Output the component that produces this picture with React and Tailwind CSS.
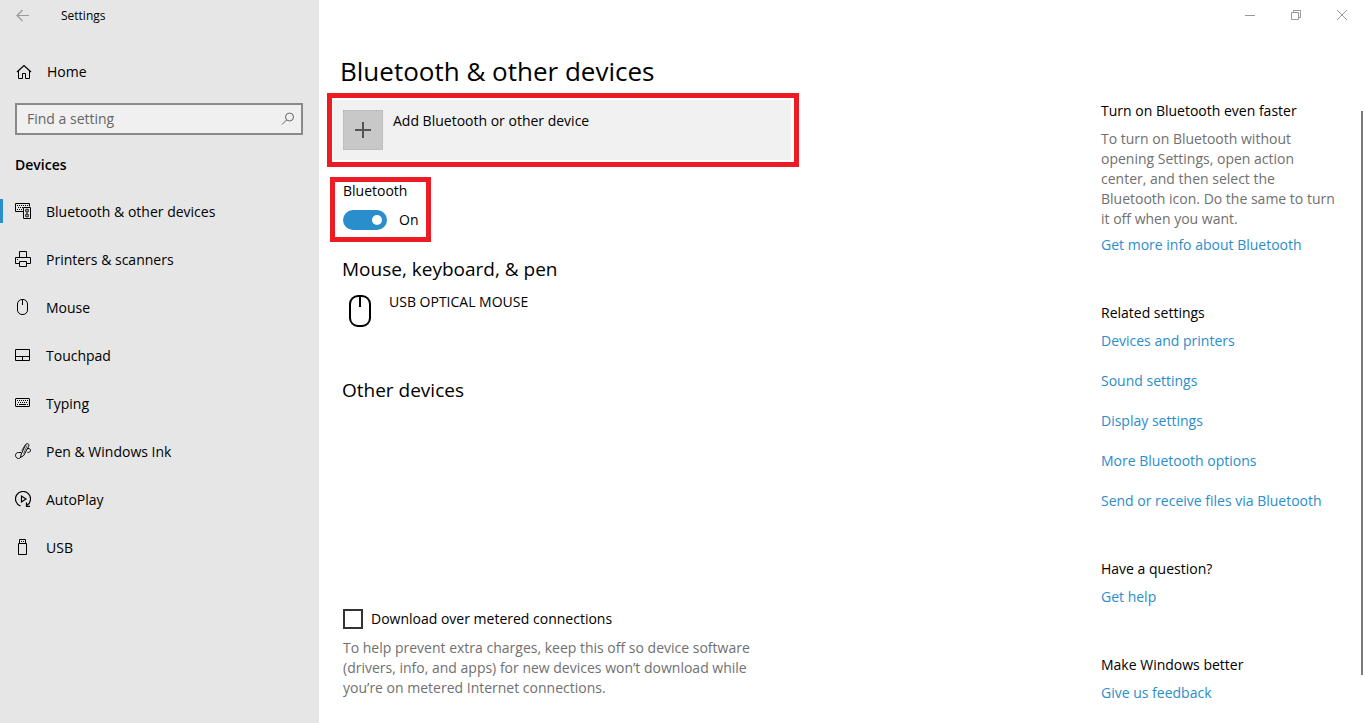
import React, { useState } from 'react';

function Icon({ size = 16, className = '', children }) {
  return (
    <svg
      width={size}
      height={size}
      viewBox={`0 0 ${size} ${size}`}
      fill="none"
      stroke="currentColor"
      className={`shrink-0 ${className}`}
      aria-hidden="true"
    >
      {children}
    </svg>
  );
}

const icons = {
  devices: (
    <Icon>
      <path d="M8 8.5H.5v-8h14v3" />
      <path d="M2 2.5h11" strokeDasharray="1 1" />
      <path d="M3 4.5h5M2 6.5h5" strokeDasharray="1 1" />
      <path d="M8.5 4.5h7v11h-7z" />
      <path d="M10 6h4v3h-4zM10 11h4v3h-4z" fill="currentColor" fillOpacity=".35" stroke="none" />
      <circle cx="12" cy="7.5" r="1.5" strokeOpacity=".7" />
      <circle cx="12" cy="12.5" r="1.5" strokeOpacity=".7" />
      <path d="M11 10h2" />
    </Icon>
  ),
  printer: (
    <Icon>
      <path d="M4.5 6V.5h7V6" />
      <path d="M4 12.5H.5v-6h15v6H12" />
      <path d="M4.5 10.5h7v5h-7z" />
      <path d="M2 8.5h1" />
    </Icon>
  ),
  mouse: (
    <Icon>
      <rect x="2.5" y=".5" width="10" height="15" rx="4.5" />
      <path d="M7.5 1v5" />
    </Icon>
  ),
  touchpad: (
    <Icon>
      <path d="M.5 2.5h14v11H.5zM1 9.5h13M7.5 10v3" />
    </Icon>
  ),
  keyboard: (
    <Icon>
      <rect x=".5" y="3.5" width="14" height="8" rx=".5" />
      <path d="M2 5.5h11M3 7.5h10" strokeDasharray="1 1" />
      <path d="M2 9.5h1M4 9.5h7M12 9.5h1" />
    </Icon>
  ),
  pen: (
    <Icon>
      <path d="M5.5 14.500l.7-3.500L10.500 2c.6-1.200 1.700-1.700 2.600-1.200.9.5 1.100 1.500.5 2.700L8.700 12.500z" />
      <path d="M10.500 1.500L6.500 7.500M12.200 2.500L8.500 10.500" strokeOpacity=".6" />
      <path d="M6 9.500H3.500c-1.800 0-3 1.200-3 2.800s1.300 3.200 3 3.200c1 0 1.700-.4 2.200-1.200" />
      <path d="M13 5.500c1.600 0 2.500.7 2.500 1.900 0 1.300-1.100 2.100-3 2.100" />
    </Icon>
  ),
  autoplay: (
    <Icon>
      <path d="M5.500 15A7.500 7.500 0 1 1 12 14.300" strokeWidth="1.200" />
      <path d="M11.500 11.500v4H15" strokeWidth="1.300" />
      <path d="M6.500 5v6l4.500-3z" strokeWidth="1.200" />
    </Icon>
  ),
  usb: (
    <Icon>
      <path d="M4.500 4V.5h6V4" />
      <path d="M3.500 4.500h8v11h-8z" />
      <path d="M6 2.500h1M8 2.500h1" />
    </Icon>
  )
};

const navItems = [
  { label: 'Bluetooth & other devices', icon: 'devices', active: true },
  { label: 'Printers & scanners', icon: 'printer' },
  { label: 'Mouse', icon: 'mouse' },
  { label: 'Touchpad', icon: 'touchpad' },
  { label: 'Typing', icon: 'keyboard' },
  { label: 'Pen & Windows Ink', icon: 'pen' },
  { label: 'AutoPlay', icon: 'autoplay' },
  { label: 'USB', icon: 'usb' }
];

const relatedLinks = [
  'Devices and printers',
  'Sound settings',
  'Display settings',
  'More Bluetooth options',
  'Send or receive files via Bluetooth'
];

function Sidebar() {
  return (
    <aside className="w-[319px] shrink-0 bg-[#e6e6e6]">
      <div className="flex h-8 items-center pl-4">
        <button type="button" aria-label="Back" className="text-[#999]">
          <Icon>
            <path d="M1 7.500h12M6.500 2L1 7.500 6.500 13" strokeWidth="1.200" />
          </Icon>
        </button>
        <span className="ml-[29px] text-xs">Settings</span>
      </div>

      <a href="#home" className="mt-4 flex h-12 items-center pl-4">
        <Icon>
          <path d="M1 8l7-6.500L15 8" strokeWidth="1.200" />
          <path d="M2.500 7v7.500h4v-5h3v5h4V7" />
        </Icon>
        <span className="ml-[15px]">Home</span>
      </a>

      <label className="mx-[15px] mt-[7px] flex h-8 w-[288px] items-center border-2 border-[#8a8a8a] bg-[#f0f0f0] pr-[5px] pl-2.5">
        <input
          type="text"
          aria-label="Find a setting"
          placeholder="Find a setting"
          className="min-w-0 flex-1 bg-transparent outline-none placeholder:text-[#666]"
        />
        <Icon className="text-[#666]">
          <circle cx="9.500" cy="6" r="4" />
          <path d="M6.500 9L2 13.500" />
        </Icon>
      </label>

      <h2 className="mt-5 pl-[15px] font-semibold">Devices</h2>

      <nav className="mt-3">
        {navItems.map((item) => (
          <a key={item.label} href={`#${item.icon}`} className="flex h-12 items-center">
            <span className={`h-6 w-[3px] ${item.active ? 'bg-[#2a8dcc]' : ''}`} />
            <span className="ml-3">{icons[item.icon]}</span>
            <span className="ml-[15px] pt-0.5">{item.label}</span>
          </a>
        ))}
      </nav>
    </aside>
  );
}

function WindowControls() {
  return (
    <div className="flex h-[30px] justify-end text-[#999]">
      <button type="button" aria-label="Minimize" className="flex w-[46px] items-center justify-center">
        <Icon size={10}>
          <path d="M0 5.500h10" />
        </Icon>
      </button>
      <button type="button" aria-label="Restore" className="flex w-[46px] items-center justify-center">
        <Icon size={10}>
          <path d="M.5 2.500h7v7h-7zM2.500 2V.5h7v7H8" />
        </Icon>
      </button>
      <button type="button" aria-label="Close" className="flex w-[46px] items-center justify-center">
        <Icon size={10}>
          <path d="M0 0l10 10M10 0L0 10" />
        </Icon>
      </button>
    </div>
  );
}

function DeviceSettings() {
  const [bluetooth, setBluetooth] = useState(true);
  const [metered, setMetered] = useState(false);

  return (
    <main className="min-w-0 flex-1 pt-6 pl-2">
      <h1 className="pl-[13px] text-[26px] leading-[34px]">Bluetooth & other devices</h1>

      {/* Highlighted: add a device */}
      <div className="mt-[5px] max-w-[472px] border-5 border-[#ed1c24] py-0.5 pr-[3px] pl-px">
        <button type="button" className="flex h-15 w-full items-start bg-[#f1f1f1] p-2.5 text-left">
          <span className="flex size-10 items-center justify-center border border-dotted border-[#b4b4b4] bg-[#c8c8c8] text-[#555]">
            <Icon>
              <path d="M0 8h16M8 0v16" strokeWidth="2" />
            </Icon>
          </span>
          <span className="ml-2.5 pt-px">Add Bluetooth or other device</span>
        </button>
      </div>

      {/* Highlighted: bluetooth switch */}
      <div className="mt-2.5 ml-[3px] h-[65px] w-[101px] border-5 border-[#ed1c24] pl-2">
        <label htmlFor="bluetooth" className="block leading-[18px]">
          Bluetooth
        </label>
        <div className="mt-2.5 flex items-center">
          <input
            id="bluetooth"
            type="checkbox"
            role="switch"
            checked={bluetooth}
            onChange={(e) => setBluetooth(e.target.checked)}
            className="flex h-5 w-11 appearance-none items-center rounded-full bg-[#999] px-[5px] before:size-2.5 before:rounded-full before:bg-white checked:justify-end checked:bg-[#2a8dcc]"
          />
          <span className="ml-3">{bluetooth ? 'On' : 'Off'}</span>
        </div>
      </div>

      <section className="mt-[13px] pl-[15px]">
        <h2 className="text-[19px] leading-7">Mouse, keyboard, & pen</h2>
        <div className="mt-2 flex items-start">
          <svg width="36" height="36" viewBox="0 0 36 36" fill="none" stroke="black" strokeWidth="2" aria-hidden="true">
            <rect x="8" y="5" width="20" height="30" rx="8" />
            <path d="M18 5v11" />
          </svg>
          <span className="ml-[11px] pt-px">USB OPTICAL MOUSE</span>
        </div>
      </section>

      <section className="mt-[49px] pl-[15px]">
        <h2 className="text-[19px] leading-7">Other devices</h2>
      </section>

      <section className="mt-[205px] max-w-[440px] pl-4">
        <label className="flex items-center">
          <input
            type="checkbox"
            checked={metered}
            onChange={(e) => setMetered(e.target.checked)}
            className="size-5 appearance-none border-2 border-[#333] checked:bg-[#2a8dcc]"
          />
          <span className="ml-2">Download over metered connections</span>
        </label>
        <p className="mt-[9px] text-[#707070]">
          To help prevent extra charges, keep this off so device software (drivers, info, and apps) for new
          devices won’t download while you’re on metered Internet connections.
        </p>
      </section>
    </main>
  );
}

function HelpLink({ children }) {
  return (
    <a href="#help" className="block text-[#2a8dcc]">
      {children}
    </a>
  );
}

function HelpPanel() {
  return (
    <div className="flex w-[264px] shrink-0 justify-between pt-[71px] pr-0.5">
      <div className="w-60">
        <h3>Turn on Bluetooth even faster</h3>
        <p className="mt-2 text-[#707070]">
          To turn on Bluetooth without opening Settings, open action center, and then select the Bluetooth
          icon. Do the same to turn it off when you want.
        </p>
        <div className="mt-1.5">
          <HelpLink>Get more info about Bluetooth</HelpLink>
        </div>

        <h3 className="mt-12">Related settings</h3>
        <div className="mt-2 flex flex-col gap-5">
          {relatedLinks.map((link) => (
            <HelpLink key={link}>{link}</HelpLink>
          ))}
        </div>

        <h3 className="mt-12">Have a question?</h3>
        <div className="mt-2">
          <HelpLink>Get help</HelpLink>
        </div>

        <h3 className="mt-12">Make Windows better</h3>
        <div className="mt-2">
          <HelpLink>Give us feedback</HelpLink>
        </div>
      </div>

      {/* Scrollbar thumb */}
      <div className="mt-2.5 mb-12 w-0.5 bg-[#7a7a7a]" />
    </div>
  );
}

export default function App() {
  return (
    <div className="flex min-h-screen bg-white font-['Open_Sans','Noto_Sans',sans-serif] text-[14px] leading-5 text-black">
      <Sidebar />
      <div className="flex min-w-0 flex-1 flex-col">
        <WindowControls />
        <div className="flex flex-1">
          <DeviceSettings />
          <HelpPanel />
        </div>
      </div>
    </div>
  );
}
